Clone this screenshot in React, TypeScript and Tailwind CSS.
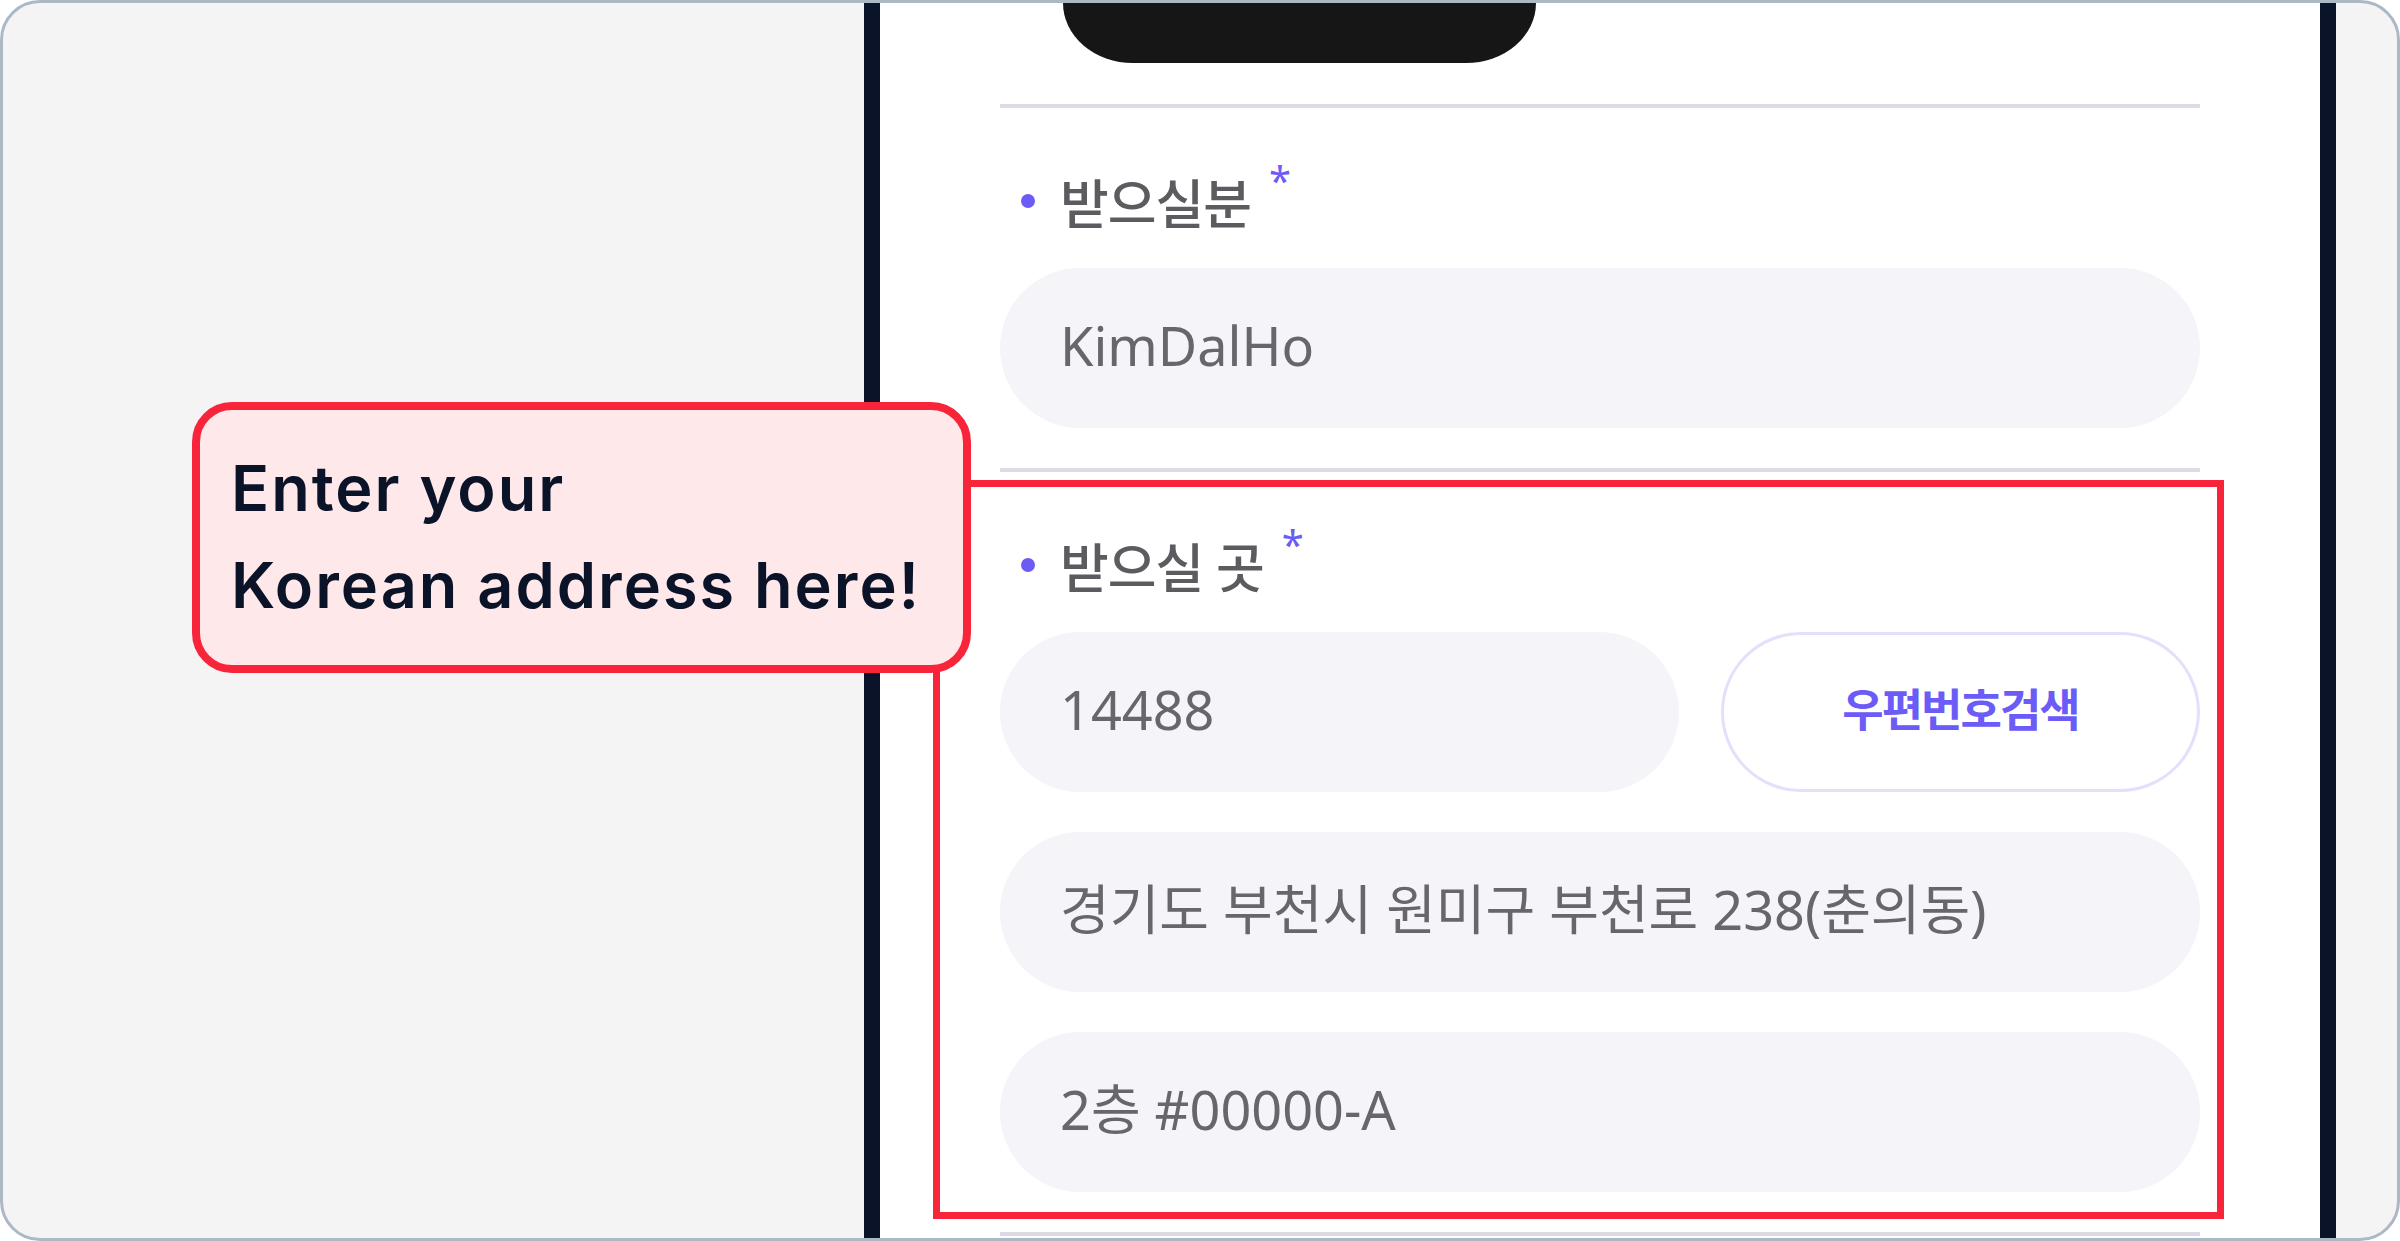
const sans = "font-['Noto_Sans','Noto_Sans_CJK_KR',sans-serif]";

function FieldLabel({ text }: { text: string }) {
  return (
    <div className="mt-[66px] flex h-[60px] items-center pl-[21px] leading-[60px]">
      <span className="mb-[6px] h-[14px] w-[14px] shrink-0 rounded-full bg-[#6b5cf6]" />
      <span className="ml-[25px] text-[53px] font-medium tracking-[-1px] text-[#5c5c60]">{text}</span>
      <span className="-mt-[14px] ml-[18px] self-start text-[40px] leading-none text-[#6b5cf6]">*</span>
    </div>
  );
}

function Field({ value, className = "" }: { value: string; className?: string }) {
  return (
    <div className={`flex h-[160px] items-center rounded-[80px] bg-[#f4f4f9] pb-[6px] pl-[60px] text-[54px] text-[#67676b] ${className}`}>
      {value}
    </div>
  );
}

function Divider() {
  return <div className="h-[4px] w-full bg-[#dcdae5]" />;
}

function PhoneScreen() {
  return (
    <div className="flex w-[1472px] shrink-0 flex-col border-x-[16px] border-[#0b1329] bg-white px-[120px]">
      <div className="ml-[63px] h-[60px] w-[473px] shrink-0 rounded-bl-[70px_60px] rounded-br-[70px_60px] bg-[#161616]" />
      <div className="mt-[41px]">
        <Divider />
      </div>

      <FieldLabel text="받으실분" />
      <div className="mt-[34px] pb-[40px]">
        <Field value="KimDalHo" />
      </div>
      <Divider />

      <FieldLabel text="받으실 곳" />
      <div className="mt-[34px] flex flex-col gap-[40px] pb-[40px]">
        <div className="flex gap-[42px]">
          <Field value="14488" className="w-[679px]" />
          <button
            type="button"
            className="flex h-[160px] flex-1 items-center justify-center rounded-full border-[3px] border-[#e3e0fb] bg-white pb-[4px] text-[45px] font-bold tracking-[-2px] text-[#6c5cf7]"
          >
            우편번호검색
          </button>
        </div>
        <Field value="경기도 부천시 원미구 부천로 238(춘의동)" />
        <Field value="2층 #00000-A" />
      </div>
      <Divider />
    </div>
  );
}

export default function App() {
  return (
    <div className="h-[1241px] w-[2400px] bg-white">
      <div className={`relative flex h-full w-full overflow-hidden rounded-[40px] border-[3px] border-[#adb8c5] bg-[#f4f4f4] ${sans}`}>
        <div className="w-[861px] shrink-0" />
        <PhoneScreen />
        <div className="flex-1" />

        {/* highlighted address block */}
        <div className="absolute left-[930px] top-[477px] h-[739px] w-[1291px] border-[7px] border-[#f7243a]" />

        {/* callout */}
        <div className="absolute left-[189px] top-[399px] h-[271px] w-[779px] rounded-[40px] border-[8px] border-[#f7243a] bg-[#fee8ea] pl-[31px] pt-[30px] font-['Inter',sans-serif] text-[63px] font-semibold leading-[97px] tracking-[2px] text-[#0b1329]">
          <p>Enter your</p>
          <p>Korean address here!</p>
        </div>
      </div>
    </div>
  );
}
